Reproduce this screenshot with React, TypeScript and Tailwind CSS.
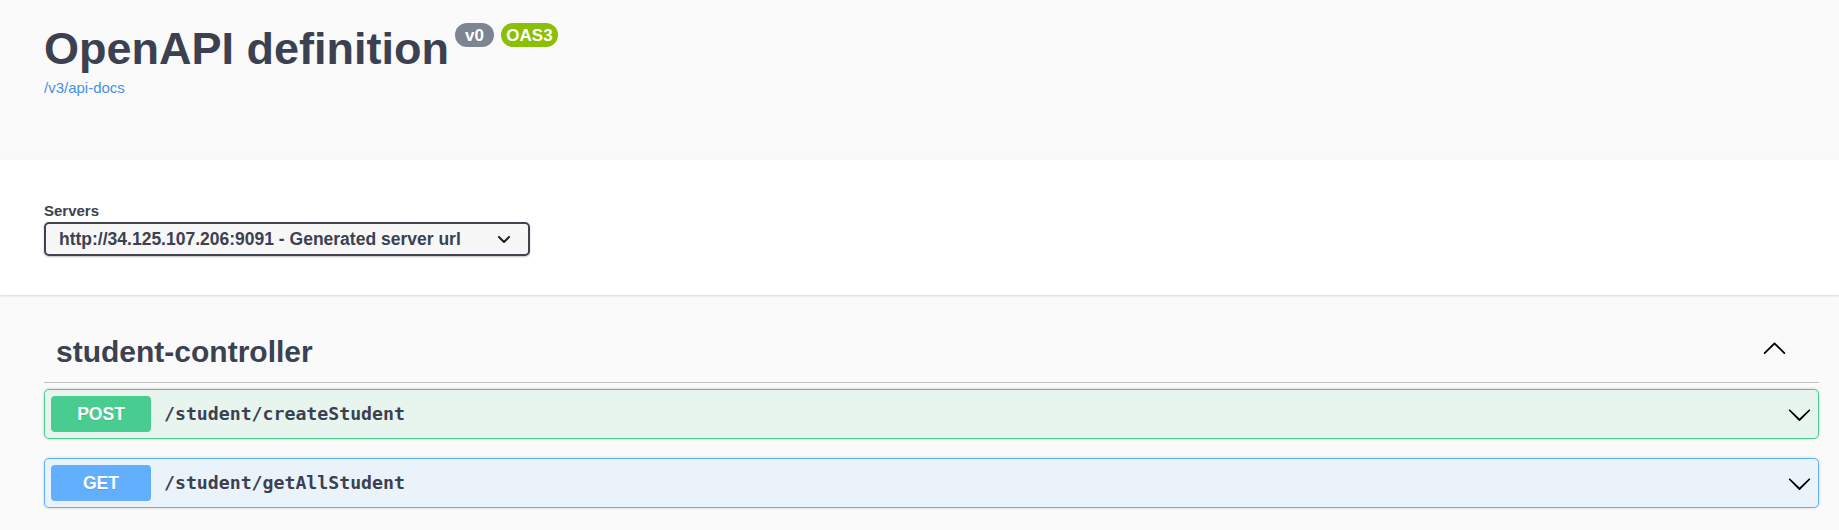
import React from "react";

function ArrowDown() {
  return (
    <svg width="25" height="25" viewBox="0 0 20 20" fill="#000" aria-hidden="true">
      <path d="M17.418 6.109c.272-.268.709-.268.979 0s.271.701 0 .969l-7.908 7.83c-.27.268-.707.268-.979 0l-7.908-7.83c-.27-.268-.27-.701 0-.969.271-.268.709-.268.979 0L10 13.25l7.418-7.141z" />
    </svg>
  );
}

function ArrowUp() {
  return (
    <svg width="25" height="25" viewBox="0 0 20 20" fill="#000" aria-hidden="true">
      <path d="M 17.418 14.908 C 17.69 15.176 18.127 15.176 18.397 14.908 C 18.667 14.64 18.668 14.207 18.397 13.939 L 10.489 6.109 C 10.219 5.841 9.782 5.841 9.51 6.109 L 1.602 13.939 C 1.332 14.207 1.332 14.64 1.602 14.908 C 1.873 15.176 2.311 15.176 2.581 14.908 L 10 7.767 L 17.418 14.908 Z" />
    </svg>
  );
}

function Opblock({
  method,
  path,
  border,
  bg,
  badge,
  className,
}: {
  method: string;
  path: string;
  border: string;
  bg: string;
  badge: string;
  className: string;
}) {
  return (
    <div
      className={`flex h-[50px] items-center rounded-[5px] border px-[6px] shadow-[0_0_3px_rgba(0,0,0,0.19)] ${border} ${bg} ${className}`}
    >
      <div
        className={`flex h-[36px] w-[100px] items-center justify-center rounded-[4px] text-[17.5px] font-bold text-white [text-shadow:0_1px_0_rgba(0,0,0,0.1)] ${badge}`}
      >
        {method}
      </div>
      <div className="ml-[13px] flex-1 font-['DejaVu_Sans_Mono',monospace] text-[18.2px] font-bold text-[#3b4151]">
        {path}
      </div>
      <div className="flex h-[25px] w-[25px] items-center justify-center">
        <ArrowDown />
      </div>
    </div>
  );
}

export default function App() {
  return (
    <div className="h-[530px] overflow-hidden bg-[#fafafa] font-['Liberation_Sans',Arial,sans-serif] text-[#3b4151]">
      {/* Info header */}
      <div className="h-[160px] bg-[#fafafa] pl-[44px] pr-[20px] pt-[23px]">
        <div className="flex items-start">
          <h2 className="text-[45px] font-bold leading-[51px] text-[#3b4151]">OpenAPI definition</h2>
          <span className="ml-[6px] flex h-[24px] w-[39px] items-center justify-center rounded-full bg-[#7d8492] text-[17px] font-bold leading-none text-white">
            v0
          </span>
          <span className="ml-[7px] flex h-[24px] w-[57px] items-center justify-center rounded-full bg-[#89bf04] text-[17px] font-bold leading-none text-white">
            OAS3
          </span>
        </div>
        <a href="#" className="mt-[5px] block w-fit text-[15px] leading-[17px] text-[#4990e2]">
          /v3/api-docs
        </a>
      </div>

      {/* Servers */}
      <div className="relative z-10 h-[135px] bg-white pl-[44px] pt-[42px] shadow-[0_1px_2px_0_rgba(0,0,0,0.15)]">
        <div className="text-[15px] font-bold leading-[17px] text-[#3b4151]">Servers</div>
        <div className="mt-[3px] flex h-[34px] w-[486px] items-center justify-between rounded-[5px] border-2 border-[#41444e] bg-[#f7f7f7] pl-[13px] pr-[18px] shadow-[0_1px_2px_0_rgba(0,0,0,0.25)]">
          <span className="text-[17.5px] font-bold text-[#3b4151]">
            http://34.125.107.206:9091 - Generated server url
          </span>
          <svg width="12" height="7" viewBox="0 0 12 7" aria-hidden="true">
            <polyline points="1,1 6,6 11,1" fill="none" stroke="#222" strokeWidth="2" strokeLinecap="round" strokeLinejoin="round" />
          </svg>
        </div>
      </div>

      {/* Operations */}
      <div className="pl-[44px] pr-[20px] pt-[27px]">
        <div className="flex items-start border-b border-[rgba(59,65,81,0.3)] pb-[13px] pl-[12px] pr-[32px] pt-[12px]">
          <h3 className="flex-1 text-[30px] font-bold leading-[35px] text-[#3b4151]">student-controller</h3>
          <div className="mt-[1px] flex h-[25px] w-[25px] items-center justify-center">
            <ArrowUp />
          </div>
        </div>
        <Opblock
          method="POST"
          path="/student/createStudent"
          border="border-[#49cc90]"
          bg="bg-[#e8f5ef]"
          badge="bg-[#49cc90]"
          className="mt-[6px]"
        />
        <Opblock
          method="GET"
          path="/student/getAllStudent"
          border="border-[#61affe]"
          bg="bg-[#ebf3fa]"
          badge="bg-[#61affe]"
          className="mt-[19px]"
        />
      </div>
    </div>
  );
}
